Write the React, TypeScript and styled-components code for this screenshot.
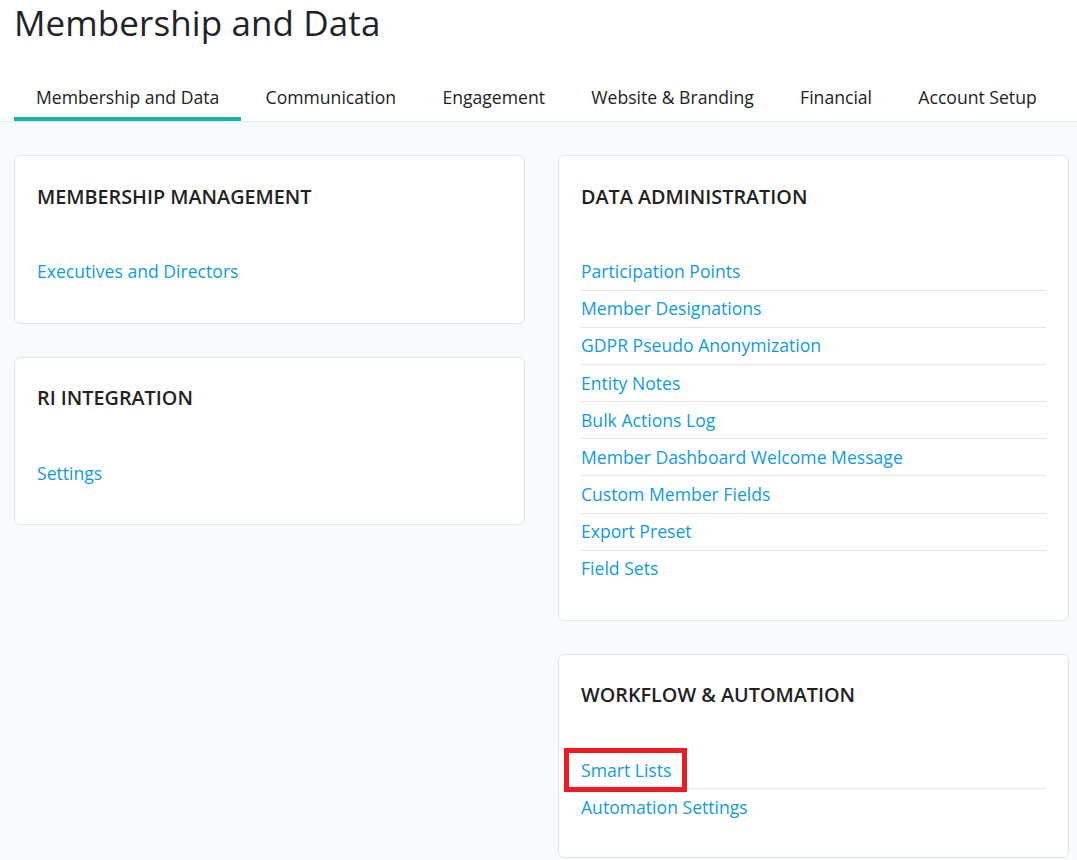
import React from "react";
import styled, { createGlobalStyle } from "styled-components";

const Global = createGlobalStyle`
  html, body { margin: 0; padding: 0; background: #f8fbfe; }
  body { font-family: "Open Sans", sans-serif; color: #222; overflow: hidden; }
`;
const Page = styled.div`
  width: 1077px; height: 860px; overflow: hidden; display: flex; flex-direction: column;
`;
const Header = styled.header`
  background: #fff; padding: 0 0 0 14px; border-bottom: 1px solid #dfe8ef; height: 122px; box-sizing: border-box;
  display: flex; flex-direction: column; flex-shrink: 0;
`;
const Title = styled.h1`
  margin: 0; font-weight: 400; font-size: 35px; line-height: 46px; color: #1f2428; letter-spacing: 0.1px; white-space: nowrap;
`;
const Tabs = styled.nav`
  display: flex; margin-top: 29px;
`;
const Tab = styled.div<{ $active?: boolean }>`
  flex-shrink: 0; white-space: nowrap;
  padding: 0 22px; margin-right: 2.3px; height: 46px; box-sizing: border-box; font-size: 17.6px; line-height: 44px; color: #222;
  border-bottom: 4px solid ${p => (p.$active ? "#17b3a3" : "transparent")};
`;
const Columns = styled.div`
  display: grid; grid-template-columns: 511px 511px; column-gap: 33px; padding: 33px 0 0 14px; align-items: start;
`;
const Column = styled.div`
  display: flex; flex-direction: column; gap: 33px;
`;
const Card = styled.section<{ $h: number }>`
  background: #fff; border: 1px solid #dce5ee; border-radius: 6px; padding: 26.7px 22px 0; box-sizing: border-box; height: ${p => p.$h}px;
`;
const CardTitle = styled.h2`
  margin: 0 0 42.45px; font-size: 19.8px; line-height: 28px; font-weight: 600; color: #222; white-space: nowrap;
`;
const Item = styled.div`
  position: relative; font-size: 17.6px; line-height: 36px; height: 37.675px; margin-bottom: -0.55px; color: #0f9be3; border-bottom: 1px solid #e4e7ea;
  box-sizing: border-box;
  &:last-child { border-bottom: none; }
`;
const Highlight = styled.div`
  position: absolute; left: -17px; top: -4px; width: 123px; height: 44px; border: 5px solid #ed1c24; box-sizing: border-box;
`;
const Link: React.FC<{ t: string; hl?: boolean }> = ({ t, hl }) => <Item>{t}{hl && <Highlight />}</Item>;

export default function App() {
  return (
    <Page>
      <Global />
      <Header>
        <Title>Membership and Data</Title>
        <Tabs>
          <Tab $active>Membership and Data</Tab>
          <Tab>Communication</Tab>
          <Tab>Engagement</Tab>
          <Tab>Website &amp; Branding</Tab>
          <Tab>Financial</Tab>
          <Tab>Account Setup</Tab>
        </Tabs>
      </Header>
      <Columns>
        <Column>
          <Card $h={168.6}>
            <CardTitle>MEMBERSHIP MANAGEMENT</CardTitle>
            <Link t="Executives and Directors" />
          </Card>
          <Card $h={168}>
            <CardTitle>RI INTEGRATION</CardTitle>
            <Link t="Settings" />
          </Card>
        </Column>
        <Column>
          <Card $h={465.6}>
            <CardTitle>DATA ADMINISTRATION</CardTitle>
            {["Participation Points","Member Designations","GDPR Pseudo Anonymization","Entity Notes","Bulk Actions Log","Member Dashboard Welcome Message","Custom Member Fields","Export Preset","Field Sets"].map(t => <Link key={t} t={t} />)}
          </Card>
          <Card $h={204.6}>
            <CardTitle>WORKFLOW &amp; AUTOMATION</CardTitle>
            <Link t="Smart Lists" hl />
            <Link t="Automation Settings" />
          </Card>
        </Column>
      </Columns>
    </Page>
  );
}
